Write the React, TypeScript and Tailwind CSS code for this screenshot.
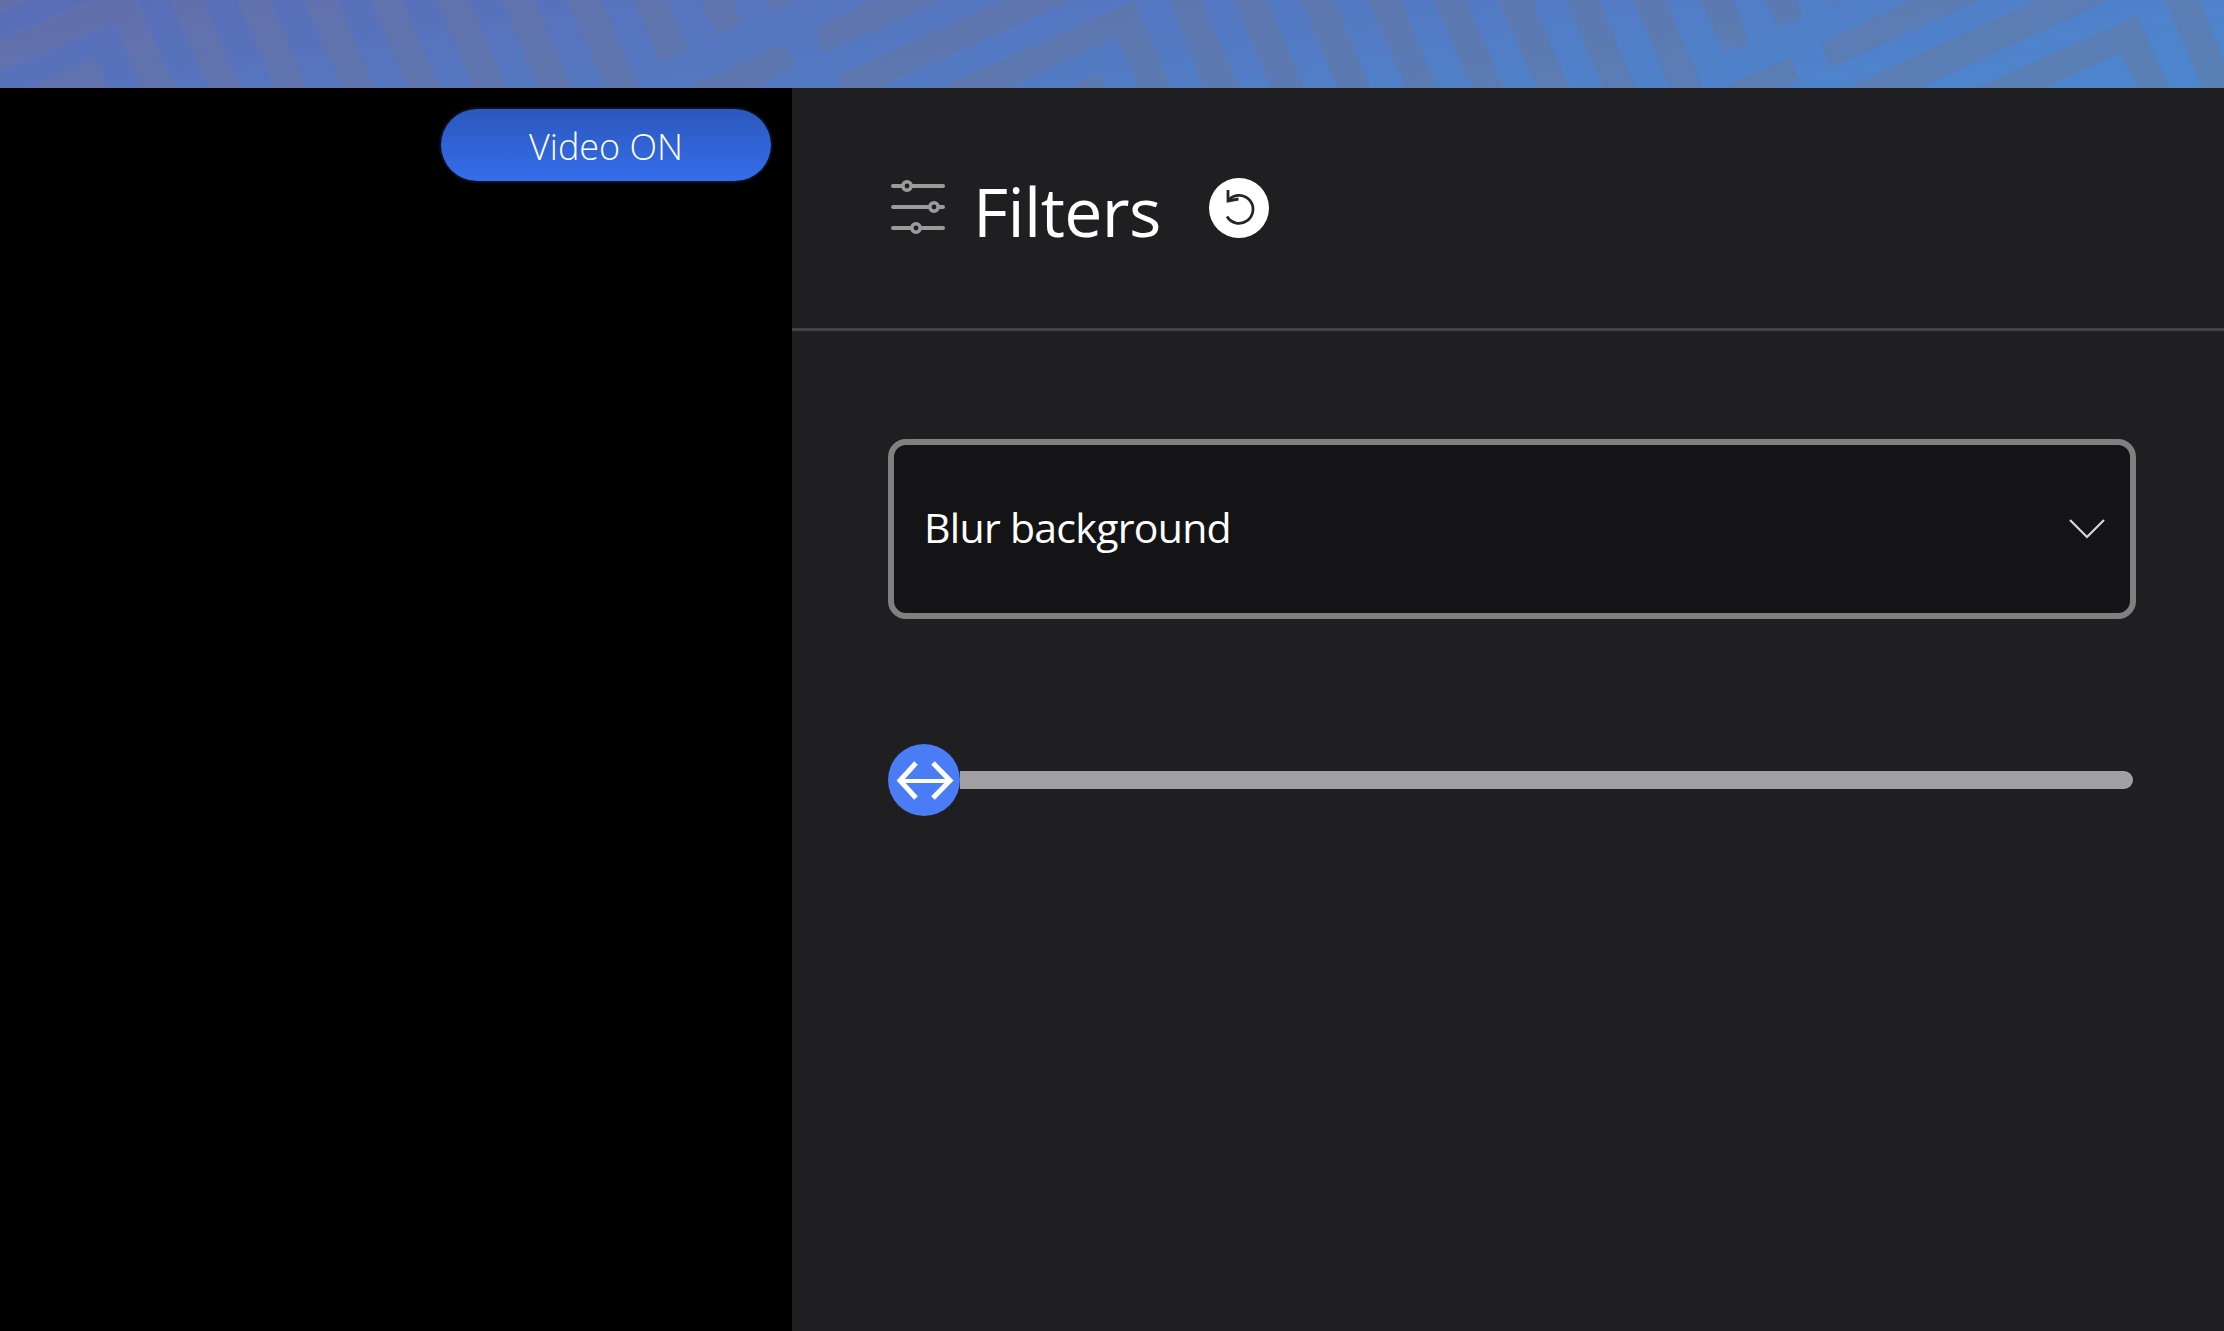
import React from 'react';

const stripes = [
  '0,13 30,0 0,0',
  '0,41 90,0 137,0 176,88 142,88 115,23 0,72',
  '27,88 95,57 108,88',
  '170,0 203,0 242,88 208,88',
  '237,0 270,0 307,88 275,88',
  '303,0 337,0 375,88 342,88',
  '370,0 403,0 440,88 408,88',
  '437,0 470,0 507,88 473,88',
  '502,0 535,0 572,88 539,88',
  '567,0 602,0 639,88 605,88',
  '634,0 667,0 689,50 660,62',
  '700,0 732,0 744,23 717,36',
  '767,0 799,0 770,13',
  '785,43 795,65 755,88 685,88',
  '815,28 872,0 942,0 824,53',
  '837,76 1002,0 1072,0 879,88 842,88',
  '939,88 1134,0 1172,88 1139,88 1116,37 1009,88',
  '1067,88 1101,73 1106,88',
  '1169,0 1201,0 1239,88 1204,88',
  '1234,0 1267,0 1304,88 1271,88',
  '1301,0 1334,0 1371,88 1337,88',
  '1367,0 1401,0 1437,88 1406,88',
  '1434,0 1466,0 1504,88 1471,88',
  '1499,0 1532,0 1570,88 1536,88',
  '1566,0 1599,0 1636,88 1603,88',
  '1633,0 1666,0 1703,88 1670,88',
  '1700,0 1734,0 1749,42 1724,53',
  '1765,0 1797,0 1804,17 1777,28',
  '1832,0 1850,0 1834,3',
  '1790,57 1800,80 1783,88 1722,88',
  '1820,43 1912,0 1980,0 1830,68',
  '1845,88 2037,0 2109,0 1920,88',
  '1975,88 2137,16 2170,88 2137,88 2120,53 2045,88',
  '2165,0 2199,0 2235,88 2202,88',
];

function Banner() {
  return (
    <svg width="2224" height="88" viewBox="0 0 2224 88" className="block shrink-0">
      <defs>
        <linearGradient id="bannerBase" gradientUnits="userSpaceOnUse" x1="0" y1="0" x2="74" y2="446">
          <stop offset="0" stopColor="#5a6db7" />
          <stop offset="1" stopColor="#4c87cf" />
        </linearGradient>
        <linearGradient id="bannerDark" gradientUnits="userSpaceOnUse" x1="0" y1="0" x2="74" y2="446">
          <stop offset="0" stopColor="#626fac" />
          <stop offset="1" stopColor="#5880b6" />
        </linearGradient>
      </defs>
      <rect width="2224" height="88" fill="url(#bannerBase)" />
      {stripes.map((points) => (
        <polygon key={points} points={points} fill="url(#bannerDark)" />
      ))}
    </svg>
  );
}

function SlidersIcon() {
  return (
    <svg width="60" height="60" viewBox="0 0 60 60" className="shrink-0">
      <g stroke="#9b9b9b" strokeWidth="4" strokeLinecap="round">
        <path d="M5 8H55M5 29H55M5 50H55" />
      </g>
      {[[19, 8], [46, 29], [28, 50]].map(([cx, cy]) => (
        <circle key={cx} cx={cx} cy={cy} r="4.2" fill="#1f1f21" stroke="#9b9b9b" strokeWidth="3.6" />
      ))}
    </svg>
  );
}

function ResetIcon() {
  return (
    <svg width="60" height="60" viewBox="0 0 60 60" className="shrink-0">
      <circle cx="30" cy="30" r="30" fill="#fff" />
      <path d="M20 21.5A14 14 0 1 1 18 38.5" fill="none" stroke="#26262a" strokeWidth="2.8" />
      <path d="M19 12V23L29.5 21" fill="none" stroke="#26262a" strokeWidth="2.8" />
    </svg>
  );
}

export default function App() {
  return (
    <div className="flex h-[1331px] w-[2224px] flex-col overflow-hidden bg-black font-['Open_Sans','Noto_Sans',sans-serif] text-white">
      <Banner />
      <div className="flex flex-1">
        {/* Video side */}
        <div className="flex w-[792px] shrink-0 items-start justify-end bg-black pt-[21px] pr-[21px]">
          <button className="flex h-[72px] w-[330px] items-center justify-center rounded-full bg-gradient-to-b from-[#2c58bd] to-[#346dec] pt-[3px] text-[36px] font-light ring-2 ring-[#0b1020]">
            Video ON
          </button>
        </div>

        {/* Filters panel */}
        <div className="flex-1 bg-[#1f1f21]">
          <div className="h-[243px] border-b-[3px] border-[#444446] pt-[90px] pl-[96px]">
            <div className="flex h-[60px] items-center">
              <SlidersIcon />
              <h1 className="mt-[6px] ml-[25px] w-[236px] text-[68px] leading-none font-normal tracking-[-0.6px]">Filters</h1>
              <ResetIcon />
            </div>
          </div>

          <div className="w-[1344px] pt-[108px] pl-[96px]">
            <div className="flex h-[180px] w-[1248px] items-center justify-between rounded-[18px] border-[6px] border-[#808080] bg-[#141416] pr-[25px] pl-[30px]">
              <span className="mt-[-2px] text-[41px] tracking-[-0.7px]">Blur background</span>
              <svg width="36" height="20" viewBox="0 0 36 20" className="mt-[-1px]">
                <path d="M1 1L18 18L35 1" fill="none" stroke="#d8d8d8" strokeWidth="2.2" />
              </svg>
            </div>

            <div className="mt-[125px] flex h-[72px] w-[1245px] items-center">
              <div className="flex h-[72px] w-[72px] shrink-0 items-center justify-center rounded-full bg-[#4a7cf6]">
                <svg width="72" height="72" viewBox="0 0 72 72">
                  <path d="M12 37H62" stroke="#fff" strokeWidth="4" />
                  <path d="M28 19L12 36.5L28 54M45 19L62 36.5L45 54" fill="none" stroke="#fff" strokeWidth="5" />
                </svg>
              </div>
              <div className="h-[18px] flex-1 rounded-r-full bg-[#a19fa1]" />
            </div>
          </div>
        </div>
      </div>
    </div>
  );
}
